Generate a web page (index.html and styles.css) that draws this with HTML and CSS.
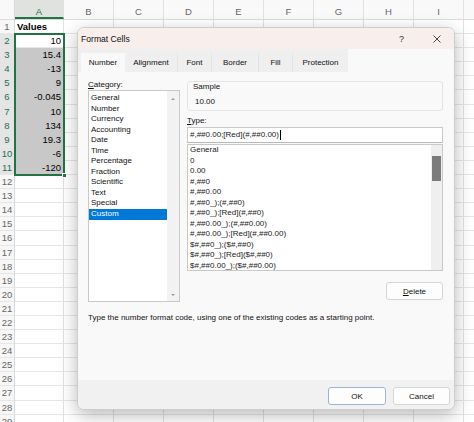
FILE: index.html
```html
<!DOCTYPE html>
<html>
<head>
<meta charset="utf-8">
<title>Format Cells</title>
<link rel="stylesheet" href="styles.css">
</head>
<body>
<div class="sheet">
  <div class="row hrow">
    <div class="rn corner"></div>
    <div class="ch ca">A</div>
    <div class="ch">B</div>
    <div class="ch">C</div>
    <div class="ch">D</div>
    <div class="ch">E</div>
    <div class="ch">F</div>
    <div class="ch">G</div>
    <div class="ch">H</div>
    <div class="ch">I</div>
  </div>
  <div class="row"><div class="rn">1</div><div class="cell head">Values</div><div class="rest"></div></div>
  <div class="row"><div class="rn sel">2</div><div class="cell num active">10</div><div class="rest"></div></div>
  <div class="row"><div class="rn sel">3</div><div class="cell num in">15.4</div><div class="rest"></div></div>
  <div class="row"><div class="rn sel">4</div><div class="cell num in">-13</div><div class="rest"></div></div>
  <div class="row"><div class="rn sel">5</div><div class="cell num in">9</div><div class="rest"></div></div>
  <div class="row"><div class="rn sel">6</div><div class="cell num in">-0.045</div><div class="rest"></div></div>
  <div class="row"><div class="rn sel">7</div><div class="cell num in">10</div><div class="rest"></div></div>
  <div class="row"><div class="rn sel">8</div><div class="cell num in">134</div><div class="rest"></div></div>
  <div class="row"><div class="rn sel">9</div><div class="cell num in">19.3</div><div class="rest"></div></div>
  <div class="row"><div class="rn sel">10</div><div class="cell num in">-6</div><div class="rest"></div></div>
  <div class="row"><div class="rn sel">11</div><div class="cell num in">-120</div><div class="rest"></div></div>
  <div class="row"><div class="rn">12</div><div class="cell"></div><div class="rest"></div></div>
  <div class="row"><div class="rn">13</div><div class="cell"></div><div class="rest"></div></div>
  <div class="row"><div class="rn">14</div><div class="cell"></div><div class="rest"></div></div>
  <div class="row"><div class="rn">15</div><div class="cell"></div><div class="rest"></div></div>
  <div class="row"><div class="rn">16</div><div class="cell"></div><div class="rest"></div></div>
  <div class="row"><div class="rn">17</div><div class="cell"></div><div class="rest"></div></div>
  <div class="row"><div class="rn">18</div><div class="cell"></div><div class="rest"></div></div>
  <div class="row"><div class="rn">19</div><div class="cell"></div><div class="rest"></div></div>
  <div class="row"><div class="rn">20</div><div class="cell"></div><div class="rest"></div></div>
  <div class="row"><div class="rn">21</div><div class="cell"></div><div class="rest"></div></div>
  <div class="row"><div class="rn">22</div><div class="cell"></div><div class="rest"></div></div>
  <div class="row"><div class="rn">23</div><div class="cell"></div><div class="rest"></div></div>
  <div class="row"><div class="rn">24</div><div class="cell"></div><div class="rest"></div></div>
  <div class="row"><div class="rn">25</div><div class="cell"></div><div class="rest"></div></div>
  <div class="row"><div class="rn">26</div><div class="cell"></div><div class="rest"></div></div>
  <div class="row"><div class="rn">27</div><div class="cell"></div><div class="rest"></div></div>
  <div class="row"><div class="rn">28</div><div class="cell"></div><div class="rest"></div></div>
  <div class="row"><div class="rn">29</div><div class="cell"></div><div class="rest"></div></div>
</div>
<div class="selbox"><span class="handle"></span></div>

<div class="dialog">
  <div class="titlebar">
    <span class="title">Format Cells</span>
    <span class="tb-btn">?</span>
    <span class="tb-btn">
      <svg width="8" height="8" viewBox="0 0 8 8"><path d="M0.5 0.5 L7.5 7.5 M7.5 0.5 L0.5 7.5" stroke="#333" stroke-width="0.9" fill="none"/></svg>
    </span>
  </div>
  <div class="tabs">
    <div class="tab active t1">Number</div>
    <div class="tab t2">Alignment</div>
    <div class="tab t3">Font</div>
    <div class="tab t4">Border</div>
    <div class="tab t5">Fill</div>
    <div class="tab t6">Protection</div>
  </div>
  <div class="body">
    <div class="cols">
      <div class="left">
        <div class="label"><u>C</u>ategory:</div>
        <div class="catlist">
          <ul class="items">
            <li>General</li>
            <li>Number</li>
            <li>Currency</li>
            <li>Accounting</li>
            <li>Date</li>
            <li>Time</li>
            <li>Percentage</li>
            <li>Fraction</li>
            <li>Scientific</li>
            <li>Text</li>
            <li>Special</li>
            <li class="selected">Custom</li>
          </ul>
          <div class="vscroll">
            <span class="arr up"></span>
            <span class="arr down"></span>
          </div>
        </div>
      </div>
      <div class="right">
        <div class="sample">
          <div class="sample-label">Sample</div>
          <div class="sample-val">10.00</div>
        </div>
        <div class="label type-label"><u>T</u>ype:</div>
        <div class="input">#,##0.00;[Red](#,##0.00)<span class="caret"></span></div>
        <div class="typelist">
          <ul class="titems">
            <li>General</li>
            <li>0</li>
            <li>0.00</li>
            <li>#,##0</li>
            <li>#,##0.00</li>
            <li>#,##0_);(#,##0)</li>
            <li>#,##0_);[Red](#,##0)</li>
            <li>#,##0.00_);(#,##0.00)</li>
            <li>#,##0.00_);[Red](#,##0.00)</li>
            <li>$#,##0_);($#,##0)</li>
            <li>$#,##0_);[Red]($#,##0)</li>
            <li>$#,##0.00_);($#,##0.00)</li>
          </ul>
          <div class="vscroll2"><div class="thumb"></div></div>
        </div>
        <div class="btnrow"><button class="btn del"><u>D</u>elete</button></div>
      </div>
    </div>
    <p class="desc">Type the number format code, using one of the existing codes as a starting point.</p>
  </div>
  <div class="footer">
    <button class="btn ok">OK</button>
    <button class="btn cancel">Cancel</button>
  </div>
</div>
</body>
</html>
```
FILE: styles.css
```css
* { box-sizing: border-box; }
html, body { margin: 0; padding: 0; }
body {
  width: 474px;
  height: 422px;
  overflow: hidden;
  position: relative;
  background: #ffffff;
  font-family: "Liberation Sans", Arial, sans-serif;
}

/* ---------- spreadsheet ---------- */
.sheet { display: flex; flex-direction: column; }
.row { display: flex; height: 14.1px; flex: none; }
.hrow { height: 20px; background: #f9f9f9; border-bottom: 1px solid #dcdcdc; }
.rn {
  width: 15px; flex: none;
  font-size: 9.5px; line-height: 13px;
  color: #666; text-align: center;
  background: #f7f7f7;
  border-right: 1px solid #d9d9d9;
  border-bottom: 1px solid #e6e6e6;
  white-space: nowrap;
  overflow: visible;
}
.rn.corner { border-bottom: none; background: #f9f9f9; }
.rn.sel { background: #e4e4e4; color: #217346; }
.ch {
  width: 50px; flex: none;
  font-size: 9.5px; line-height: 15px; padding-top: 4px; color: #666;
  text-align: center;
  border-right: 1px solid #e1e1e1;
}
.ch.ca { width: 49px; background: #dfe2df; color: #217346; border-bottom: 2px solid #217346; }
.cell {
  width: 49px; flex: none;
  font-size: 9.5px; line-height: 13px; color: #000;
  border-right: 1px solid #e1e1e1;
  border-bottom: 1px solid #e6e6e6;
  padding: 0 2px;
  white-space: nowrap;
}
.cell.head { font-weight: bold; }
.cell.num { text-align: right; }
.cell.in { background: #c8c8c8; border-bottom-color: #c8c8c8; border-right-color: #c8c8c8; }
.cell.active { background: #fff; }
.rest {
  flex: 1;
  border-bottom: 1px solid #e6e6e6;
  background-image: repeating-linear-gradient(to right, transparent 0 49px, #e1e1e1 49px 50px);
}
.selbox {
  position: absolute;
  left: 14px; top: 33px;
  width: 51px; height: 143px;
  border: 2px solid #217346;
}
.handle {
  position: absolute;
  right: -4px; bottom: -4px;
  width: 5px; height: 5px;
  background: #217346;
  border: 1px solid #fff;
}

/* ---------- dialog ---------- */
.dialog {
  position: absolute;
  left: 77px; top: 27px;
  width: 378px; height: 383px;
  background: #f9f9f9;
  border: 1px solid #cdcdcd;
  border-radius: 7px;
  box-shadow: 0 5px 18px rgba(0, 0, 0, 0.28);
  display: flex; flex-direction: column;
  overflow: hidden;
  font-size: 8px;
  color: #111;
}
.titlebar {
  height: 21px; flex: none;
  background: #f8efed;
  display: flex; align-items: center;
  padding-left: 3px;
}
.title { font-size: 8.6px; flex: 1; color: #111; }
.tb-btn {
  width: 35px; height: 21px;
  display: flex; align-items: center; justify-content: center;
  font-size: 9px; color: #333;
}
.tabs {
  height: 23px; flex: none;
  width: 270px;
  background: #efefef;
  display: flex; align-items: flex-end;
  padding-left: 3px;
}
.tab {
  height: 19px;
  line-height: 19px;
  text-align: center;
  color: #111;
  border-right: 1px solid #e4e4e4;
  white-space: nowrap;
}
.tab.active { background: #f9f9f9; border-right: none; }
.t1 { width: 44px; }
.t2 { width: 53px; }
.t3 { width: 34px; }
.t4 { width: 47px; }
.t5 { width: 34px; }
.t6 { width: 55px; border-right: none; }

.body {
  flex: 1;
  padding: 7px 11px 0 10px;
}
.cols { display: flex; gap: 7px; align-items: flex-start; }
.left { width: 92px; flex: none; }
.right { width: 256px; flex: none; display: flex; flex-direction: column; }
.label { height: 11px; line-height: 11px; color: #111; }

.catlist {
  height: 212px;
  background: #fff;
  border: 1px solid #c9c9c9;
  display: flex;
}
.items {
  list-style: none; margin: 0;
  padding: 2px 0 0 0;
  flex: 1;
}
.items li {
  height: 10.55px; line-height: 10.55px;
  padding-left: 2px;
  white-space: nowrap;
}
.items li.selected { background: #0078d7; color: #fff; }
.vscroll {
  width: 12px; flex: none;
  background: #f2f2f2;
  display: flex; flex-direction: column; justify-content: space-between; align-items: center;
  padding: 7px 0 5px;
}
.arr { width: 0; height: 0; border-left: 2px solid transparent; border-right: 2px solid transparent; }
.arr.up { border-bottom: 2px solid #9a9a9a; }
.arr.down { border-top: 2px solid #9a9a9a; }

.sample {
  margin-top: 2px;
  height: 30px;
  border: 1px solid #e4e4e4;
  border-radius: 3px;
  padding: 0 5px;
}
.sample-label { line-height: 9px; height: 9px; }
.sample-val { line-height: 9px; margin-top: 6px; margin-left: 2px; }
.type-label { margin-top: 4px; }
.input {
  margin-top: 1px;
  height: 16px;
  background: #fff;
  border: 1px solid #c9c9c9;
  border-bottom-color: #b9b9b9;
  padding-left: 2px;
  line-height: 14px;
  color: #222;
  display: flex; align-items: center;
}
.caret { width: 1px; height: 10px; background: #000; margin-left: 1px; }
.typelist {
  margin-top: 1px;
  height: 127px;
  background: #fff;
  border: 1px solid #c9c9c9;
  display: flex;
}
.titems { list-style: none; margin: 0; padding: 0; flex: 1; overflow: hidden; }
.titems li {
  height: 10.55px; line-height: 10.55px;
  padding-left: 2px;
  white-space: nowrap;
  color: #222;
}
.vscroll2 {
  width: 11px; flex: none;
  background: #efefef;
  padding: 11px 1px 0 1px;
}
.thumb { height: 25px; background: #7b7b7b; }

.btnrow { display: flex; justify-content: flex-end; margin-top: 11px; }
.btn {
  font-family: inherit;
  font-size: 8px;
  color: #111;
  height: 18px;
  background: #fdfdfd;
  border: 1px solid #d5d5d5;
  border-radius: 3px;
  padding: 0;
  margin: 0;
}
.del { width: 57px; }
.desc { margin: 10px 0 0; line-height: 11px; }

.footer {
  height: 29px; flex: none;
  background: #f1f1f1;
  display: flex; justify-content: flex-end; gap: 7px;
  padding: 7px 4px 0 0;
}
.ok { width: 58px; border-color: #9db6d3; }
.cancel { width: 57px; }
```
